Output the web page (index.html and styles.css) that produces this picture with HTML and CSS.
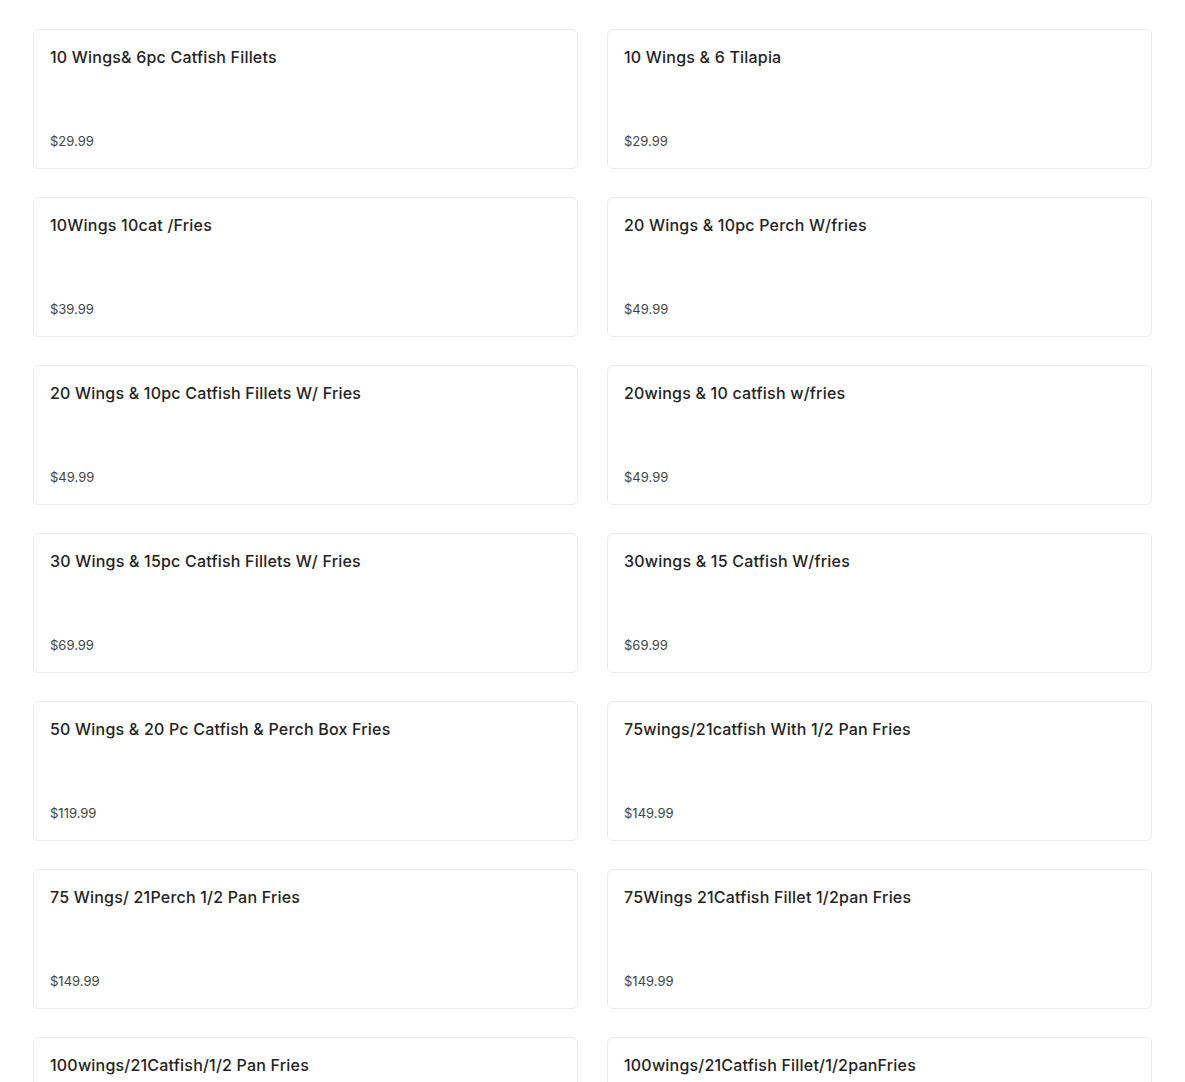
FILE: index.html
```html
<!DOCTYPE html>
<html lang="en">
<head>
    <meta charset="UTF-8">
    <title>Menu - Wing Combos</title>
    <link rel="stylesheet" href="styles.css">
</head>
<body>
    <div class="menu">
        <div class="menu-grid">
            <div class="item">
                <div class="item-name">10 Wings&amp; 6pc Catfish Fillets</div>
                <div class="item-price">$29.99</div>
            </div>
            <div class="item">
                <div class="item-name">10 Wings &amp; 6 Tilapia</div>
                <div class="item-price">$29.99</div>
            </div>
            <div class="item">
                <div class="item-name">10Wings 10cat /Fries</div>
                <div class="item-price">$39.99</div>
            </div>
            <div class="item">
                <div class="item-name">20 Wings &amp; 10pc Perch W/fries</div>
                <div class="item-price">$49.99</div>
            </div>
            <div class="item">
                <div class="item-name">20 Wings &amp; 10pc Catfish Fillets W/ Fries</div>
                <div class="item-price">$49.99</div>
            </div>
            <div class="item">
                <div class="item-name">20wings &amp; 10 catfish w/fries</div>
                <div class="item-price">$49.99</div>
            </div>
            <div class="item">
                <div class="item-name">30 Wings &amp; 15pc Catfish Fillets W/ Fries</div>
                <div class="item-price">$69.99</div>
            </div>
            <div class="item">
                <div class="item-name">30wings &amp; 15 Catfish W/fries</div>
                <div class="item-price">$69.99</div>
            </div>
            <div class="item">
                <div class="item-name">50 Wings &amp; 20 Pc Catfish &amp; Perch Box Fries</div>
                <div class="item-price">$119.99</div>
            </div>
            <div class="item">
                <div class="item-name">75wings/21catfish With 1/2 Pan Fries</div>
                <div class="item-price">$149.99</div>
            </div>
            <div class="item">
                <div class="item-name">75 Wings/ 21Perch 1/2 Pan Fries</div>
                <div class="item-price">$149.99</div>
            </div>
            <div class="item">
                <div class="item-name">75Wings 21Catfish Fillet 1/2pan Fries</div>
                <div class="item-price">$149.99</div>
            </div>
            <div class="item">
                <div class="item-name">100wings/21Catfish/1/2 Pan Fries</div>
                <div class="item-price">$179.99</div>
            </div>
            <div class="item">
                <div class="item-name">100wings/21Catfish Fillet/1/2panFries</div>
                <div class="item-price">$179.99</div>
            </div>
        </div>
    </div>
</body>
</html>
```

FILE: styles.css
```css
* {
    margin: 0;
    padding: 0;
    box-sizing: border-box;
}

body {
    font-family: 'Inter', 'Open Sans', sans-serif;
    background: #fff;
    color: #222;
}

.menu {
    padding: 29px 33px;
}

.menu-grid {
    display: grid;
    grid-template-columns: 1fr 1fr;
    gap: 28px 29px;
}

.item {
    height: 140px;
    display: flex;
    flex-direction: column;
    justify-content: space-between;
    padding: 15px 16px 17px;
    border: 1px solid #ebebeb;
    border-radius: 6px;
    background: #fff;
}

.item-name {
    font-size: 16px;
    font-weight: 500;
    line-height: 24px;
    letter-spacing: 0.2px;
    color: #232323;
}

.item-price {
    font-size: 13px;
    line-height: 20px;
    color: #444;
}
```
